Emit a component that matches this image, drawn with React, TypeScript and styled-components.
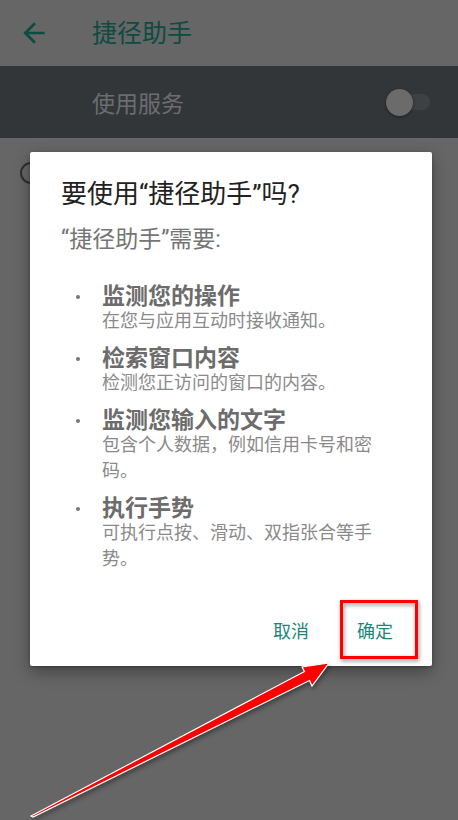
import React from "react";
import styled, { createGlobalStyle } from "styled-components";

const GlobalStyle = createGlobalStyle`
  html, body { margin: 0; padding: 0; background: #666666; }
  body { font-family: Roboto, "Noto Sans CJK SC", sans-serif; }
  * { box-sizing: border-box; }
`;

const Screen = styled.div`
  position: relative;
  width: 458px;
  height: 820px;
  overflow: hidden;
  background: #666666;
  display: flex;
  flex-direction: column;
`;

const Toolbar = styled.header`
  height: 66px;
  flex-shrink: 0;
  display: flex;
  align-items: center;
  padding-left: 18px;
`;

const BackIcon = styled.svg`
  width: 32px;
  height: 32px;
  margin-right: 42px;
  fill: #0c4c42;
`;

const ToolbarTitle = styled.h1`
  margin: 0;
  font-size: 25px;
  font-weight: 400;
  color: #0c4c42;
  line-height: 1;
`;

const ServiceRow = styled.div`
  height: 72px;
  flex-shrink: 0;
  background: #333639;
  display: flex;
  align-items: center;
  justify-content: space-between;
  padding: 0 28px 0 92px;
`;

const ServiceLabel = styled.span`
  font-size: 23px;
  color: #6c6d6f;
`;

const Switch = styled.div`
  position: relative;
  width: 44px;
  height: 27px;
  display: flex;
  align-items: center;
`;

const SwitchTrack = styled.div`
  margin-left: 9px;
  width: 35px;
  height: 16px;
  border-radius: 8px;
  background: #3e4144;
`;

const SwitchThumb = styled.div`
  position: absolute;
  left: 0;
  top: 0;
  width: 27px;
  height: 27px;
  border-radius: 50%;
  background: #6b6b6b;
  box-shadow: 0 1px 3px rgba(0, 0, 0, 0.45);
`;

const OptionRow = styled.div`
  height: 70px;
  display: flex;
  align-items: center;
  padding-left: 20px;
`;

const Radio = styled.div`
  width: 22px;
  height: 22px;
  border-radius: 50%;
  border: 2px solid #303030;
`;

const Dialog = styled.div`
  position: absolute;
  left: 30px;
  top: 152px;
  width: 402px;
  background: #ffffff;
  border-radius: 2px;
  box-shadow: 0 6px 16px rgba(0, 0, 0, 0.35), 0 1px 3px rgba(0, 0, 0, 0.25);
  display: flex;
  flex-direction: column;
`;

const DialogBody = styled.div`
  padding: 26px 24px 0 31px;
  display: flex;
  flex-direction: column;
`;

const DialogTitle = styled.h2`
  margin: 0;
  font-size: 26px;
  line-height: 32px;
  font-weight: 400;
  color: #212121;
`;

const Message = styled.p`
  margin: 17px 0 0;
  font-size: 23px;
  line-height: 26px;
  color: #757575;
`;

const PermissionList = styled.ul`
  margin: 32px 0 0;
  padding: 0;
  list-style: none;
  display: flex;
  flex-direction: column;
  gap: 13px;
`;

const PermissionItem = styled.li`
  display: grid;
  grid-template-columns: 41px 1fr;
`;

const BulletCell = styled.div`
  height: 23px;
  display: flex;
  align-items: center;
  padding-left: 15px;
`;

const Dot = styled.span`
  width: 4px;
  height: 4px;
  border-radius: 50%;
  background: #777777;
`;

const PermissionText = styled.div`
  width: 280px;
  display: flex;
  flex-direction: column;
`;

const PermissionTitle = styled.span`
  font-size: 23px;
  line-height: 23px;
  font-weight: 700;
  color: #6c6c6c;
`;

const PermissionDesc = styled.span`
  font-size: 18px;
  line-height: 26px;
  color: #8a8a8a;
`;

const ButtonRow = styled.div`
  margin-top: 38px;
  display: flex;
  justify-content: flex-end;
  gap: 20px;
  padding: 0 25px 16px 0;
`;

const TextButton = styled.button`
  height: 40px;
  min-width: 63px;
  padding: 0 14px;
  border: none;
  background: transparent;
  font-family: Roboto, "Noto Sans CJK SC", sans-serif;
  font-size: 18px;
  color: #17897a;
`;

const Highlight = styled.div`
  position: absolute;
  left: 340px;
  top: 600px;
  width: 78px;
  height: 59px;
  border: 3px solid #ff0000;
  filter: drop-shadow(1px 2px 2px rgba(0, 0, 0, 0.45));
`;

const ArrowLayer = styled.svg`
  position: absolute;
  left: 0;
  top: 0;
  width: 458px;
  height: 820px;
  pointer-events: none;
  filter: drop-shadow(1px 3px 2px rgba(0, 0, 0, 0.35));
`;

const permissions = [
  { title: "监测您的操作", desc: "在您与应用互动时接收通知。" },
  { title: "检索窗口内容", desc: "检测您正访问的窗口的内容。" },
  { title: "监测您输入的文字", desc: "包含个人数据，例如信用卡号和密码。" },
  { title: "执行手势", desc: "可执行点按、滑动、双指张合等手势。" },
];

export default function App() {
  return (
    <>
      <GlobalStyle />
      <Screen>
        <Toolbar>
          <BackIcon viewBox="0 0 24 24">
            <path d="M20 11H7.83l5.59-5.59L12 4l-8 8 8 8 1.41-1.41L7.83 13H20v-2z" />
          </BackIcon>
          <ToolbarTitle>捷径助手</ToolbarTitle>
        </Toolbar>
        <ServiceRow>
          <ServiceLabel>使用服务</ServiceLabel>
          <Switch>
            <SwitchTrack />
            <SwitchThumb />
          </Switch>
        </ServiceRow>
        <OptionRow>
          <Radio />
        </OptionRow>

        <Dialog>
          <DialogBody>
            <DialogTitle>要使用“捷径助手”吗?</DialogTitle>
            <Message>“捷径助手”需要:</Message>
            <PermissionList>
              {permissions.map((p) => (
                <PermissionItem key={p.title}>
                  <BulletCell>
                    <Dot />
                  </BulletCell>
                  <PermissionText>
                    <PermissionTitle>{p.title}</PermissionTitle>
                    <PermissionDesc>{p.desc}</PermissionDesc>
                  </PermissionText>
                </PermissionItem>
              ))}
            </PermissionList>
          </DialogBody>
          <ButtonRow>
            <TextButton>取消</TextButton>
            <TextButton>确定</TextButton>
          </ButtonRow>
        </Dialog>

        <Highlight />
        <ArrowLayer viewBox="0 0 458 820">
          <polygon
            points="31,816 304.5,671.5 302,667 329,663 312,686 309.5,680.5 33,817"
            fill="#ff0000"
            stroke="#ffffff"
            strokeWidth="1.2"
            strokeLinejoin="miter"
          />
        </ArrowLayer>
      </Screen>
    </>
  );
}
